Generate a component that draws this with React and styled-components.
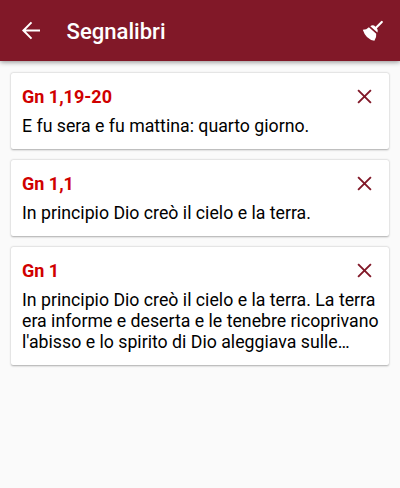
import React from 'react';
import styled, { createGlobalStyle } from 'styled-components';

const Global = createGlobalStyle`
  * { box-sizing: border-box; }
  body { margin: 0; background: #fafafa; font-family: Roboto, "Noto Sans", sans-serif; }
`;
const Page = styled.div`
  width: 400px;
  height: 488px;
  overflow: hidden;
  background: #fafafa;
`;
const Bar = styled.header`
  display: flex;
  align-items: center;
  height: 61px;
  padding: 0 15px 0 20px;
  background: #811828;
  box-shadow: 0 1px 5px rgba(0, 0, 0, 0.45);
  color: #fff;
`;
const Title = styled.h1`
  flex: 1;
  margin: 0 0 0 24.5px;
  padding-top: 1px;
  font-size: 22.1px;
  font-weight: 500;
  line-height: 30px;
`;
const Icon = styled.svg`
  display: block;
  flex: none;
`;
const List = styled.main`
  display: flex;
  flex-direction: column;
  gap: 11px;
  padding: 12px 11px;
`;
const Card = styled.article`
  padding: 10px 11px 12px;
  background: #fff;
  border-radius: 2px;
  box-shadow: 0 0.5px 2px rgba(0, 0, 0, 0.32);
`;
const CardHead = styled.div`
  display: flex;
  align-items: center;
  justify-content: space-between;
  height: 26px;
  padding-right: 6px;
`;
const Reference = styled.h2`
  margin: 0;
  font-size: 18px;
  font-weight: 700;
  color: #d00000;
`;
const Verse = styled.p`
  margin: 7px 0 0;
  font-size: 17.73px;
  line-height: 21px;
  color: #000;
  white-space: nowrap;
`;

const bookmarks = [
  { title: 'Gn 1,19-20', lines: ['E fu sera e fu mattina: quarto giorno.'] },
  { title: 'Gn 1,1', lines: ['In principio Dio creò il cielo e la terra.'] },
  { title: 'Gn 1', lines: ['In principio Dio creò il cielo e la terra. La terra', 'era informe e deserta e le tenebre ricoprivano', "l'abisso e lo spirito di Dio aleggiava sulle…"] },
];

export default function App() {
  return (
    <Page>
      <Global />
      <Bar>
        <Icon width="22" height="23" viewBox="0 0 22 23" fill="none" stroke="#fff" strokeWidth="2">
          <path d="M20 11.5H4M11.5 3.4L3.4 11.5l8.1 8.1" />
        </Icon>
        <Title>Segnalibri</Title>
        <Icon width="25" height="25" viewBox="0 0 25 25" fill="#fff">
          <path d="M15.5 10.2L21.8 4" fill="none" stroke="#fff" strokeWidth="2.2" strokeLinecap="round" />
          <path d="M10.3 8.2Q13 6.2 15.5 8.7Q18.6 11.5 17.4 14.4Z" />
          <path d="M8.9 9.3L16.2 15.8Q16.8 19.4 14.4 22.8Q5.8 21.4 2.8 11.8Q6.5 11.8 8.9 9.3Z" />
        </Icon>
      </Bar>
      <List>
        {bookmarks.map((b) => (
          <Card key={b.title}>
            <CardHead>
              <Reference>{b.title}</Reference>
              <Icon width="15" height="15" viewBox="0 0 15 15" fill="none" stroke="#811828" strokeWidth="1.9">
                <path d="M1.1 1.1l12.8 12.8M13.9 1.1L1.1 13.9" />
              </Icon>
            </CardHead>
            <Verse>
              {b.lines.map((line, i) => (
                <React.Fragment key={line}>{i > 0 && <br />}{line}</React.Fragment>
              ))}
            </Verse>
          </Card>
        ))}
      </List>
    </Page>
  );
}
